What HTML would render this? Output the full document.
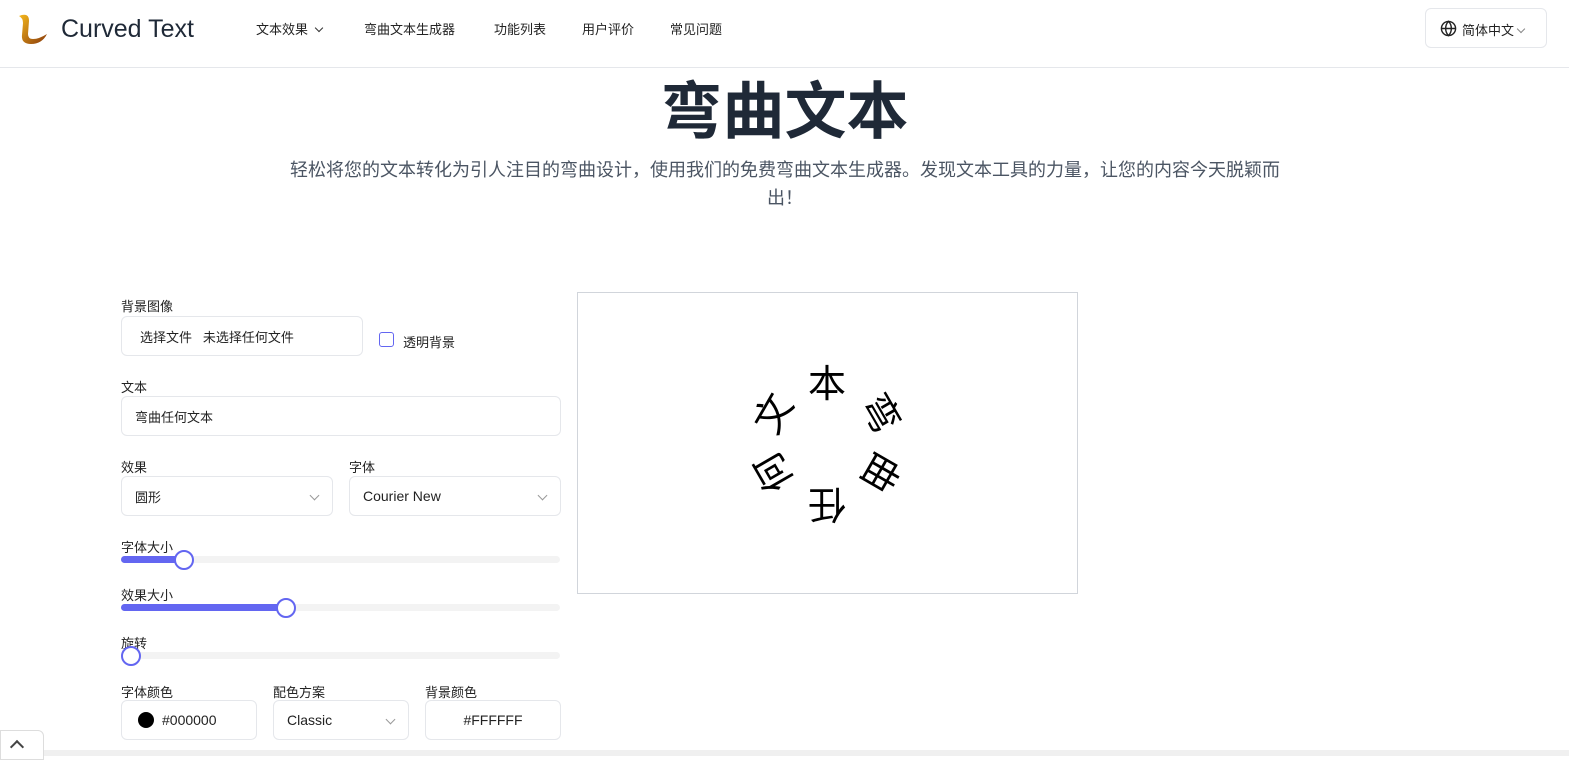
<!DOCTYPE html>
<html><head><meta charset="utf-8"><style>
*{box-sizing:border-box;margin:0;padding:0}
body{width:1569px;height:756px;overflow:hidden;background:#fff;font-family:"Liberation Sans","Noto Sans CJK SC",sans-serif;color:#1f2937;position:relative}
.a{position:absolute}
.nav{font-size:13px;color:#222;top:19px}
.lbl{font-size:13px;color:#222}
.box{border:1px solid #e5e7eb;border-radius:6px;background:#fff;font-size:14px;color:#222;display:flex;align-items:center;padding-left:13px}
.chev{position:absolute;right:14px;top:15px;width:7px;height:7px;border-right:1px solid #999;border-bottom:1px solid #999;transform:rotate(45deg)}
.track{height:7px;background:#f3f3f3;border-radius:4px;left:121px;width:439px}
.fill{height:7px;background:#6366f1;border-radius:4px;left:121px}
.knob{width:20px;height:20px;border:2px solid #6366f1;border-radius:50%;background:#fff}
.ch{position:absolute;font-size:38px;width:42px;height:42px;line-height:42px;text-align:center;color:#000;font-family:"Noto Sans CJK SC",sans-serif}
</style></head><body>
<div class="a" style="left:0;top:67px;width:1569px;height:1px;background:#e5e7eb"></div>
<svg class="a" style="left:17px;top:13px" width="32" height="32" viewBox="0 0 32 32"><defs><linearGradient id="g" x1="0" y1="0" x2="1" y2="1"><stop offset="0" stop-color="#f5b81c"/><stop offset="1" stop-color="#8a3b0c"/></linearGradient></defs><path d="M2 3 Q12 -1 12 8 L11 21 Q11 26 16 26 Q22 26 30 21 Q25 31 14 31 Q4 31 5 22 L6 10 Q6 5 2 3Z" fill="url(#g)"/></svg>
<div class="a" style="left:61px;top:15px;font-size:25px;color:#1f2937">Curved Text</div>
<div class="a nav" style="left:256px">文本效果 <span style="display:inline-block;width:6px;height:6px;border-right:1.5px solid #333;border-bottom:1.5px solid #333;transform:rotate(45deg);margin:0 4px 3px 4px"></span></div>
<div class="a nav" style="left:364px">弯曲文本生成器</div>
<div class="a nav" style="left:494px">功能列表</div>
<div class="a nav" style="left:582px">用户评价</div>
<div class="a nav" style="left:670px">常见问题</div>
<div class="a" style="left:1425px;top:8px;width:122px;height:40px;border:1px solid #e5e7eb;border-radius:6px;font-size:13px;color:#222;padding:11px 0 0 14px">
<svg style="position:absolute;left:14px;top:11px" width="17" height="17" viewBox="0 0 24 24" fill="none" stroke="#222" stroke-width="2"><circle cx="12" cy="12" r="10"/><path d="M2 12h20M12 2c3 3 4 6.5 4 10s-1 7-4 10c-3-3-4-6.5-4-10s1-7 4-10z"/></svg>
<span style="margin-left:22px">简体中文</span><span style="display:inline-block;width:6px;height:6px;border-right:1px solid #888;border-bottom:1px solid #888;transform:rotate(45deg);margin:0 0 3px 4px"></span></div>
<div class="a" style="left:0;width:1569px;top:71px;text-align:center;font-size:62px;font-weight:bold;color:#1f2937;line-height:84px">弯曲文本</div>
<div class="a" style="left:284px;width:1002px;top:156px;text-align:center;font-size:18px;color:#4b5563;line-height:28px">轻松将您的文本转化为引人注目的弯曲设计，使用我们的免费弯曲文本生成器。发现文本工具的力量，让您的内容今天脱颖而出！</div>

<div class="a lbl" style="left:121px;top:296px">背景图像</div>
<div class="a box" style="left:121px;top:316px;width:242px;height:40px;padding-left:18px;font-size:13px">选择文件&nbsp;&nbsp;&nbsp;未选择任何文件</div>
<div class="a" style="left:379px;top:332px;width:15px;height:15px;border:1px solid #6366f1;border-radius:3px"></div>
<div class="a lbl" style="left:403px;top:332px">透明背景</div>
<div class="a lbl" style="left:121px;top:377px">文本</div>
<div class="a box" style="left:121px;top:396px;width:440px;height:40px;font-size:13px">弯曲任何文本</div>
<div class="a lbl" style="left:121px;top:457px">效果</div>
<div class="a box" style="left:121px;top:476px;width:212px;height:40px;font-size:13px">圆形<span class="chev"></span></div>
<div class="a lbl" style="left:349px;top:457px">字体</div>
<div class="a box" style="left:349px;top:476px;width:212px;height:40px">Courier New<span class="chev"></span></div>
<div class="a lbl" style="left:121px;top:537px">字体大小</div>
<div class="a track" style="top:556px"></div><div class="a fill" style="top:556px;width:60px"></div><div class="a knob" style="left:174px;top:550px"></div>
<div class="a lbl" style="left:121px;top:585px">效果大小</div>
<div class="a track" style="top:604px"></div><div class="a fill" style="top:604px;width:162px"></div><div class="a knob" style="left:276px;top:598px"></div>
<div class="a lbl" style="left:121px;top:633px">旋转</div>
<div class="a track" style="top:652px"></div><div class="a knob" style="left:121px;top:646px"></div>
<div class="a lbl" style="left:121px;top:682px">字体颜色</div>
<div class="a box" style="left:121px;top:700px;width:136px;height:40px;padding-left:16px"><span style="width:16px;height:16px;border-radius:50%;background:#000;display:inline-block;margin-right:8px"></span>#000000</div>
<div class="a lbl" style="left:273px;top:682px">配色方案</div>
<div class="a box" style="left:273px;top:700px;width:136px;height:40px">Classic<span class="chev"></span></div>
<div class="a lbl" style="left:425px;top:682px">背景颜色</div>
<div class="a box" style="left:425px;top:700px;width:136px;height:40px;justify-content:center;padding:0">#FFFFFF</div>
<div class="a" style="left:0;top:750px;width:1569px;height:6px;background:#f0f0f0"></div>
<div class="a" style="left:0;top:730px;width:44px;height:30px;background:#fff;border:1px solid #ddd;border-radius:0 6px 0 0"></div>
<div class="a" style="left:12px;top:742px;width:10px;height:10px;border-left:2px solid #444;border-top:2px solid #444;transform:rotate(45deg)"></div>

<div class="a" style="left:577px;top:292px;width:501px;height:302px;border:1px solid #d1d5db"></div>
<div class="ch" style="left:806px;top:360px">本</div>
<div class="ch" style="left:862px;top:391px;transform:rotate(60deg)">弯</div>
<div class="ch" style="left:862px;top:453px;transform:rotate(120deg)">曲</div>
<div class="ch" style="left:806px;top:486px;transform:rotate(180deg)">任</div>
<div class="ch" style="left:750px;top:453px;transform:rotate(240deg)">何</div>
<div class="ch" style="left:750px;top:391px;transform:rotate(300deg)">文</div>
</body></html>
